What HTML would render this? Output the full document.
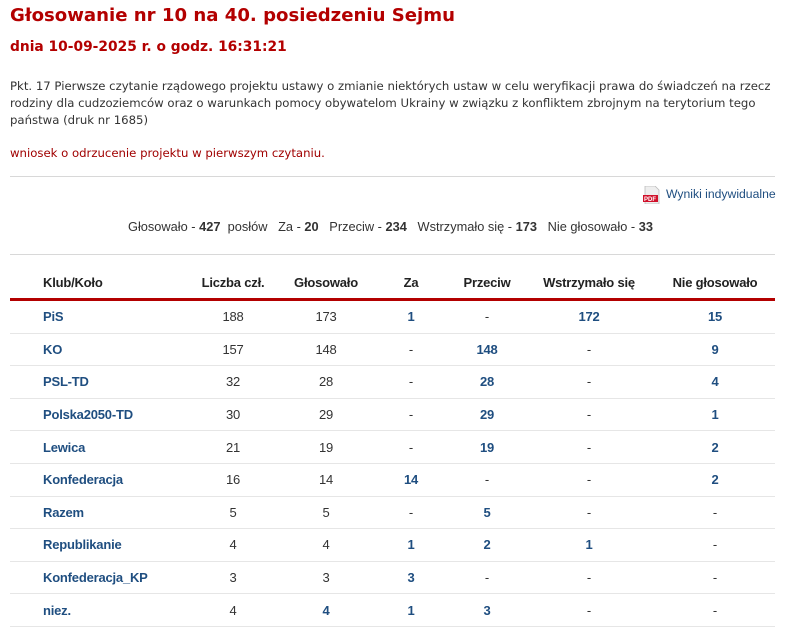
<!DOCTYPE html>
<html><head><meta charset="utf-8"><style>
body{margin:0;background:#fff;width:787px;height:631px;overflow:hidden;font-family:"DejaVu Sans",Verdana,sans-serif;}
h1{position:absolute;left:10px;top:5px;margin:0;font-size:18.1px;font-weight:bold;color:#b30000;white-space:nowrap}
h2{position:absolute;left:10px;top:39px;margin:0;font-size:13.8px;font-weight:bold;color:#b30000;white-space:nowrap}
.p{position:absolute;left:10px;top:78px;width:775px;font-size:11.7px;line-height:17px;color:#333}
.w{position:absolute;left:10px;top:146px;font-size:11.7px;color:#a00000}
.hr{position:absolute;left:10px;width:765px;height:1px;background:#d8d8d8}
.n{font-family:"Liberation Sans",Arial,sans-serif;font-size:13px;color:#333;position:absolute;white-space:nowrap}
.pdf{position:absolute;left:643px;top:186px;width:17px;height:18px}
table{position:absolute;left:10px;top:267px;width:765px;border-collapse:collapse;font-family:"Liberation Sans",Arial,sans-serif;font-size:13px;letter-spacing:-0.2px;color:#333}
th{height:31px;border-bottom:3px solid #b30000;font-weight:bold;text-align:center;color:#222;padding:0}
td{height:31.6px;border-bottom:1px solid #e6e6e6;text-align:center;padding:0}
td.k,th.k{text-align:left;padding-left:33px}
td.k{color:#1f4e80;font-weight:bold}
b.l{color:#1f4e80}
</style></head><body>
<h1>Głosowanie nr 10 na 40. posiedzeniu Sejmu</h1>
<h2>dnia 10-09-2025 r. o godz. 16:31:21</h2>
<div class="p">Pkt. 17 Pierwsze czytanie rządowego projektu ustawy o zmianie niektórych ustaw w celu weryfikacji prawa do świadczeń na rzecz rodziny dla cudzoziemców oraz o warunkach pomocy obywatelom Ukrainy w związku z konfliktem zbrojnym na terytorium tego państwa (druk nr 1685)</div>
<div class="w">wniosek o odrzucenie projektu w pierwszym czytaniu.</div>
<div class="hr" style="top:176px"></div>
<svg class="pdf" viewBox="0 0 17 18"><path d="M2 0h10l4 4v14H2z" fill="#eee" stroke="#bbb" stroke-width=".8"/><rect x="0" y="9" width="15" height="7" fill="#d0102a"/><text x="1" y="15" font-size="6" font-family="Liberation Sans" font-weight="bold" fill="#fff">PDF</text></svg>
<div class="n" style="left:666px;top:187px;font-size:12.2px;color:#1f4e80">Wyniki indywidualne</div>
<div class="n" style="left:128px;top:219px;font-size:12.8px">Głosowało - <b>427</b>&nbsp; posłów &nbsp; Za - <b>20</b> &nbsp; Przeciw - <b>234</b> &nbsp; Wstrzymało się - <b>173</b> &nbsp; Nie głosowało - <b>33</b></div>
<div class="hr" style="top:254px"></div>
<table>
<colgroup><col style="width:175px"><col style="width:96px"><col style="width:90px"><col style="width:80px"><col style="width:72px"><col style="width:132px"><col></colgroup>
<tr><th class="k">Klub/Koło</th><th>Liczba czł.</th><th>Głosowało</th><th>Za</th><th>Przeciw</th><th>Wstrzymało się</th><th>Nie głosowało</th></tr>
<tr><td class="k">PiS</td><td>188</td><td>173</td><td><b class="l">1</b></td><td>-</td><td><b class="l">172</b></td><td><b class="l">15</b></td></tr>
<tr><td class="k">KO</td><td>157</td><td>148</td><td>-</td><td><b class="l">148</b></td><td>-</td><td><b class="l">9</b></td></tr>
<tr><td class="k">PSL-TD</td><td>32</td><td>28</td><td>-</td><td><b class="l">28</b></td><td>-</td><td><b class="l">4</b></td></tr>
<tr><td class="k">Polska2050-TD</td><td>30</td><td>29</td><td>-</td><td><b class="l">29</b></td><td>-</td><td><b class="l">1</b></td></tr>
<tr><td class="k">Lewica</td><td>21</td><td>19</td><td>-</td><td><b class="l">19</b></td><td>-</td><td><b class="l">2</b></td></tr>
<tr><td class="k">Konfederacja</td><td>16</td><td>14</td><td><b class="l">14</b></td><td>-</td><td>-</td><td><b class="l">2</b></td></tr>
<tr><td class="k">Razem</td><td>5</td><td>5</td><td>-</td><td><b class="l">5</b></td><td>-</td><td>-</td></tr>
<tr><td class="k">Republikanie</td><td>4</td><td>4</td><td><b class="l">1</b></td><td><b class="l">2</b></td><td><b class="l">1</b></td><td>-</td></tr>
<tr><td class="k">Konfederacja_KP</td><td>3</td><td>3</td><td><b class="l">3</b></td><td>-</td><td>-</td><td>-</td></tr>
<tr><td class="k">niez.</td><td>4</td><td><b class="l">4</b></td><td><b class="l">1</b></td><td><b class="l">3</b></td><td>-</td><td>-</td></tr>
</table>
</body></html>
